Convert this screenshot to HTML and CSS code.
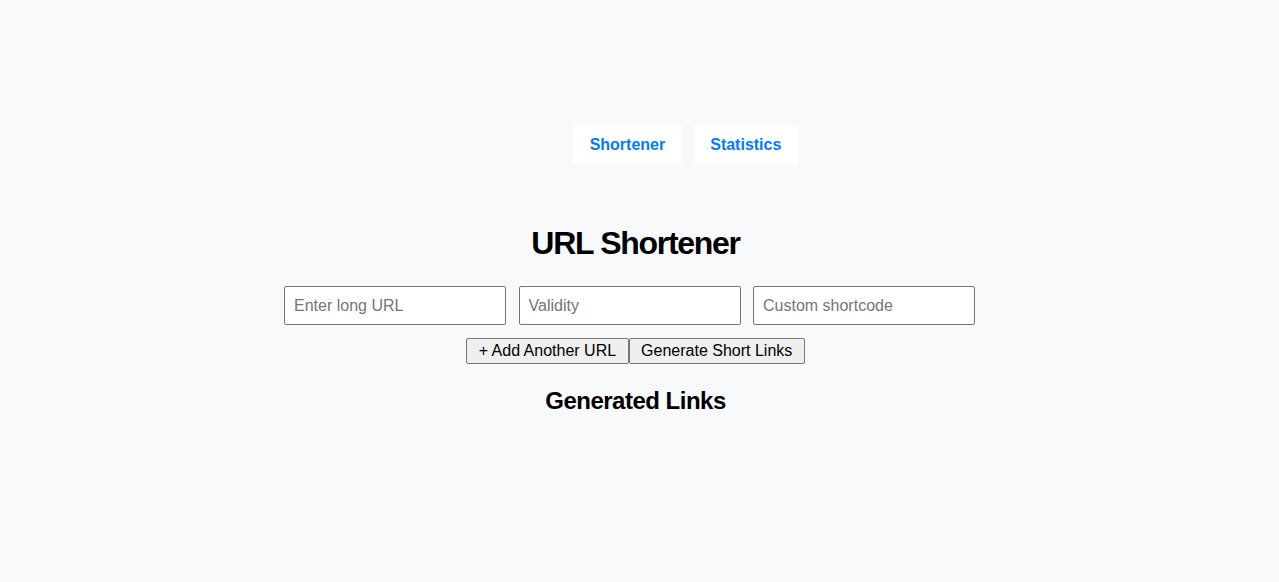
FILE: index.html
```html
<!DOCTYPE html>
<html lang="en">
<head>
<meta charset="utf-8">
<title>URL Shortener</title>
<link rel="stylesheet" href="styles.css">
</head>
<body>
<nav class="nav">
  <a class="nav-link" href="#">Shortener</a>
  <a class="nav-link" href="#">Statistics</a>
</nav>
<main class="main">
  <h1 class="title">URL Shortener</h1>
  <div class="inputs">
    <input class="field" type="text" placeholder="Enter long URL">
    <input class="field" type="text" placeholder="Validity">
    <input class="field" type="text" placeholder="Custom shortcode">
  </div>
  <div class="actions">
    <button class="btn" type="button">+ Add Another URL</button>
    <button class="btn" type="button">Generate Short Links</button>
  </div>
  <h2 class="subtitle">Generated Links</h2>
</main>
</body>
</html>
```
FILE: styles.css
```css
html, body {
  margin: 0;
  padding: 0;
}
body {
  background: #f8f9fa;
  font-family: "Liberation Sans", Arial, sans-serif;
  color: #000;
  min-height: 582px;
}
.nav {
  display: flex;
  justify-content: center;
  gap: 12px;
  padding-top: 125px;
  padding-left: 92px;
}
.nav-link {
  display: block;
  background: #fff;
  color: #007bff;
  font-weight: bold;
  font-size: 16px;
  line-height: 19px;
  padding: 10px 16.5px;
  text-decoration: none;
}
.main {
  display: flex;
  flex-direction: column;
  align-items: center;
  padding-right: 8px;
}
.title {
  font-size: 32px;
  line-height: 37px;
  letter-spacing: -1.3px;
  margin: 61px 0 24px;
}
.inputs {
  display: flex;
  gap: 12.5px;
  padding-right: 12px;
}
.field {
  box-sizing: border-box;
  width: 222px;
  height: 39px;
  padding: 0 9px;
  border: 1px solid #767676;
  border-radius: 2px;
  background: #fff;
  font-family: "Liberation Sans", Arial, sans-serif;
  font-size: 16px;
  color: #000;
}
.field::placeholder {
  color: #757575;
}
.actions {
  display: flex;
  margin-top: 13px;
}
.btn {
  box-sizing: border-box;
  height: 26px;
  padding: 0 11.5px;
  border: 1px solid #767676;
  border-radius: 2px;
  background: #efefef;
  font-family: "Liberation Sans", Arial, sans-serif;
  font-size: 16px;
  color: #000;
}
.subtitle {
  font-size: 24px;
  line-height: 28px;
  letter-spacing: -0.5px;
  margin: 23px 0 0;
}
```
